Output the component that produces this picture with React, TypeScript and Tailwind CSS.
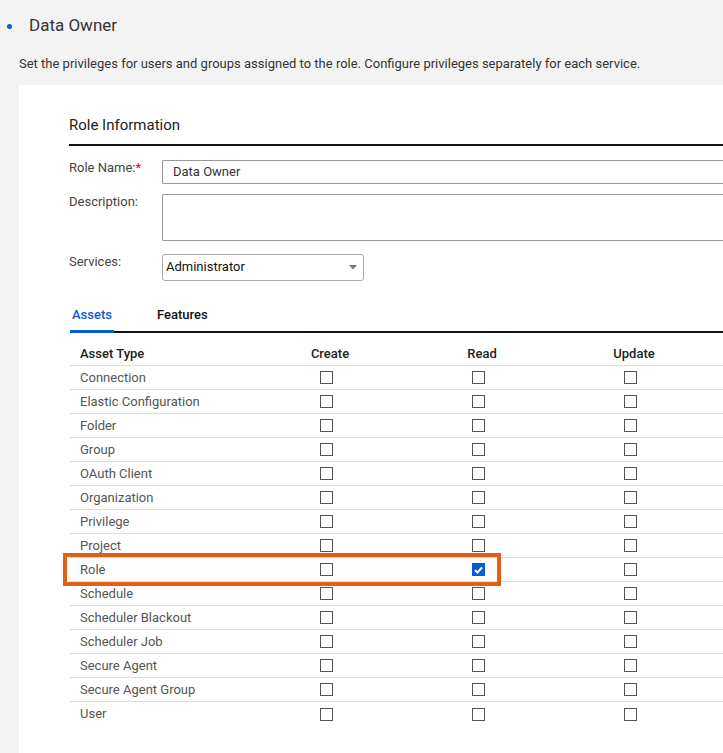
import React from 'react';

const assets = [
  'Connection',
  'Elastic Configuration',
  'Folder',
  'Group',
  'OAuth Client',
  'Organization',
  'Privilege',
  'Project',
  'Role',
  'Schedule',
  'Scheduler Blackout',
  'Scheduler Job',
  'Secure Agent',
  'Secure Agent Group',
  'User',
];

const Box = ({ checked = false }: { checked?: boolean }) =>
  checked ? (
    <span className="flex h-[13px] w-[13px] items-center justify-center bg-[#0b5ad6]">
      <svg width="9" height="8" viewBox="0 0 9 8">
        <path d="M1 4.2 L3.4 6.5 L8 1.5" stroke="#fff" strokeWidth="2" fill="none" />
      </svg>
    </span>
  ) : (
    <span className="block h-[13px] w-[13px] border-[1.5px] border-[#555] bg-white" />
  );

export default function App() {
  return (
    <div
      className="min-h-[753px] w-[723px] overflow-hidden bg-[#f3f3f3] text-[#333]"
      style={{ fontFamily: 'Roboto, "Liberation Sans", sans-serif' }}
    >
      {/* Page header */}
      <div className="flex h-[50px] items-center pt-[2px]">
        <span className="ml-[7px] h-[5px] w-[5px] rounded-full bg-[#0b5ad6]" />
        <span className="ml-[17px] text-[17px] text-[#333]">Data Owner</span>
      </div>
      <p className="ml-[19px] mt-[5px] text-[13px] leading-[18px] text-[#333]">
        Set the privileges for users and groups assigned to the role. Configure privileges separately for each service.
      </p>

      {/* Panel */}
      <div className="ml-[19px] mt-[12px] min-h-[668px] bg-white pl-[50px] pt-[30px]">
        <div className="text-[15px] leading-[20px] text-[#222]">Role Information</div>
        <div className="mt-[9px] h-[1.5px] bg-[#111]" />

        {/* Form */}
        <div className="mt-[14px] flex flex-col">
          <div className="flex">
            <div className="w-[93px] pt-[1px] text-[13px] leading-[14px] text-[#444]">
              Role Name:<span className="text-[#d00]">*</span>
            </div>
            <div className="flex h-[24px] flex-1 items-center rounded-l-[2px] border border-r-0 border-[#999] pl-[10px] pt-[1px] text-[13px] text-[#333]">
              Data Owner
            </div>
          </div>
          <div className="mt-[10px] flex">
            <div className="w-[93px] pt-[1px] text-[13px] leading-[14px] text-[#444]">Description:</div>
            <div className="h-[47px] flex-1 rounded-l-[2px] border border-r-0 border-[#999]" />
          </div>
          <div className="mt-[13px] flex">
            <div className="w-[93px] pt-[1px] text-[13px] leading-[14px] text-[#444]">Services:</div>
            <div className="flex h-[27px] w-[202px] items-center justify-between rounded-[3px] border border-[#aaa] pl-[3px] pr-[5px] text-[13px] text-[#111]">
              Administrator
              <svg width="10" height="6" viewBox="0 0 10 6">
                <path d="M1 1 L9 1 L5 5.5 Z" fill="#777" />
              </svg>
            </div>
          </div>
        </div>

        {/* Tabs */}
        <div className="ml-[1px] mt-[24px] flex border-b-2 border-[#111] text-[13px] font-medium">
          <div className="relative px-[2px] pb-[7px] text-[#0b5ad6]">
            Assets
            <span className="absolute -bottom-[2px] left-0 h-[3px] w-[44px] bg-[#0b5ad6]" />
          </div>
          <div className="ml-[43px] pb-[7px] text-[#111]">Features</div>
        </div>

        {/* Table */}
        <div className="ml-[1px] text-[13px]">
          <div className="grid h-[33px] grid-cols-[180px_152px_152px_152px] items-center border-b border-[#ddd] font-medium text-[#222]">
            <div className="pl-[10px] pt-[10px]">Asset Type</div>
            <div className="pl-[8px] pt-[10px] text-center">Create</div>
            <div className="pl-[8px] pt-[10px] text-center">Read</div>
            <div className="pl-[8px] pt-[10px] text-center">Update</div>
          </div>
          {assets.map((a, i) => (
            <div
              key={a}
              className={`relative grid h-[24px] grid-cols-[180px_152px_152px_152px] items-center text-[#555] ${
                i < assets.length - 1 ? 'border-b border-[#ddd]' : ''
              }`}
            >
              <div className="pl-[10px]">{a}</div>
              <div className="flex justify-center">
                <Box />
              </div>
              <div className="flex justify-center">
                <Box checked={a === 'Role'} />
              </div>
              <div className="flex justify-center">
                <Box />
              </div>
              {a === 'Role' && (
                <div className="pointer-events-none absolute left-[-7px] top-[-5px] h-[33px] w-[438px] border-4 border-[#e35f16]" />
              )}
            </div>
          ))}
        </div>
      </div>
    </div>
  );
}
